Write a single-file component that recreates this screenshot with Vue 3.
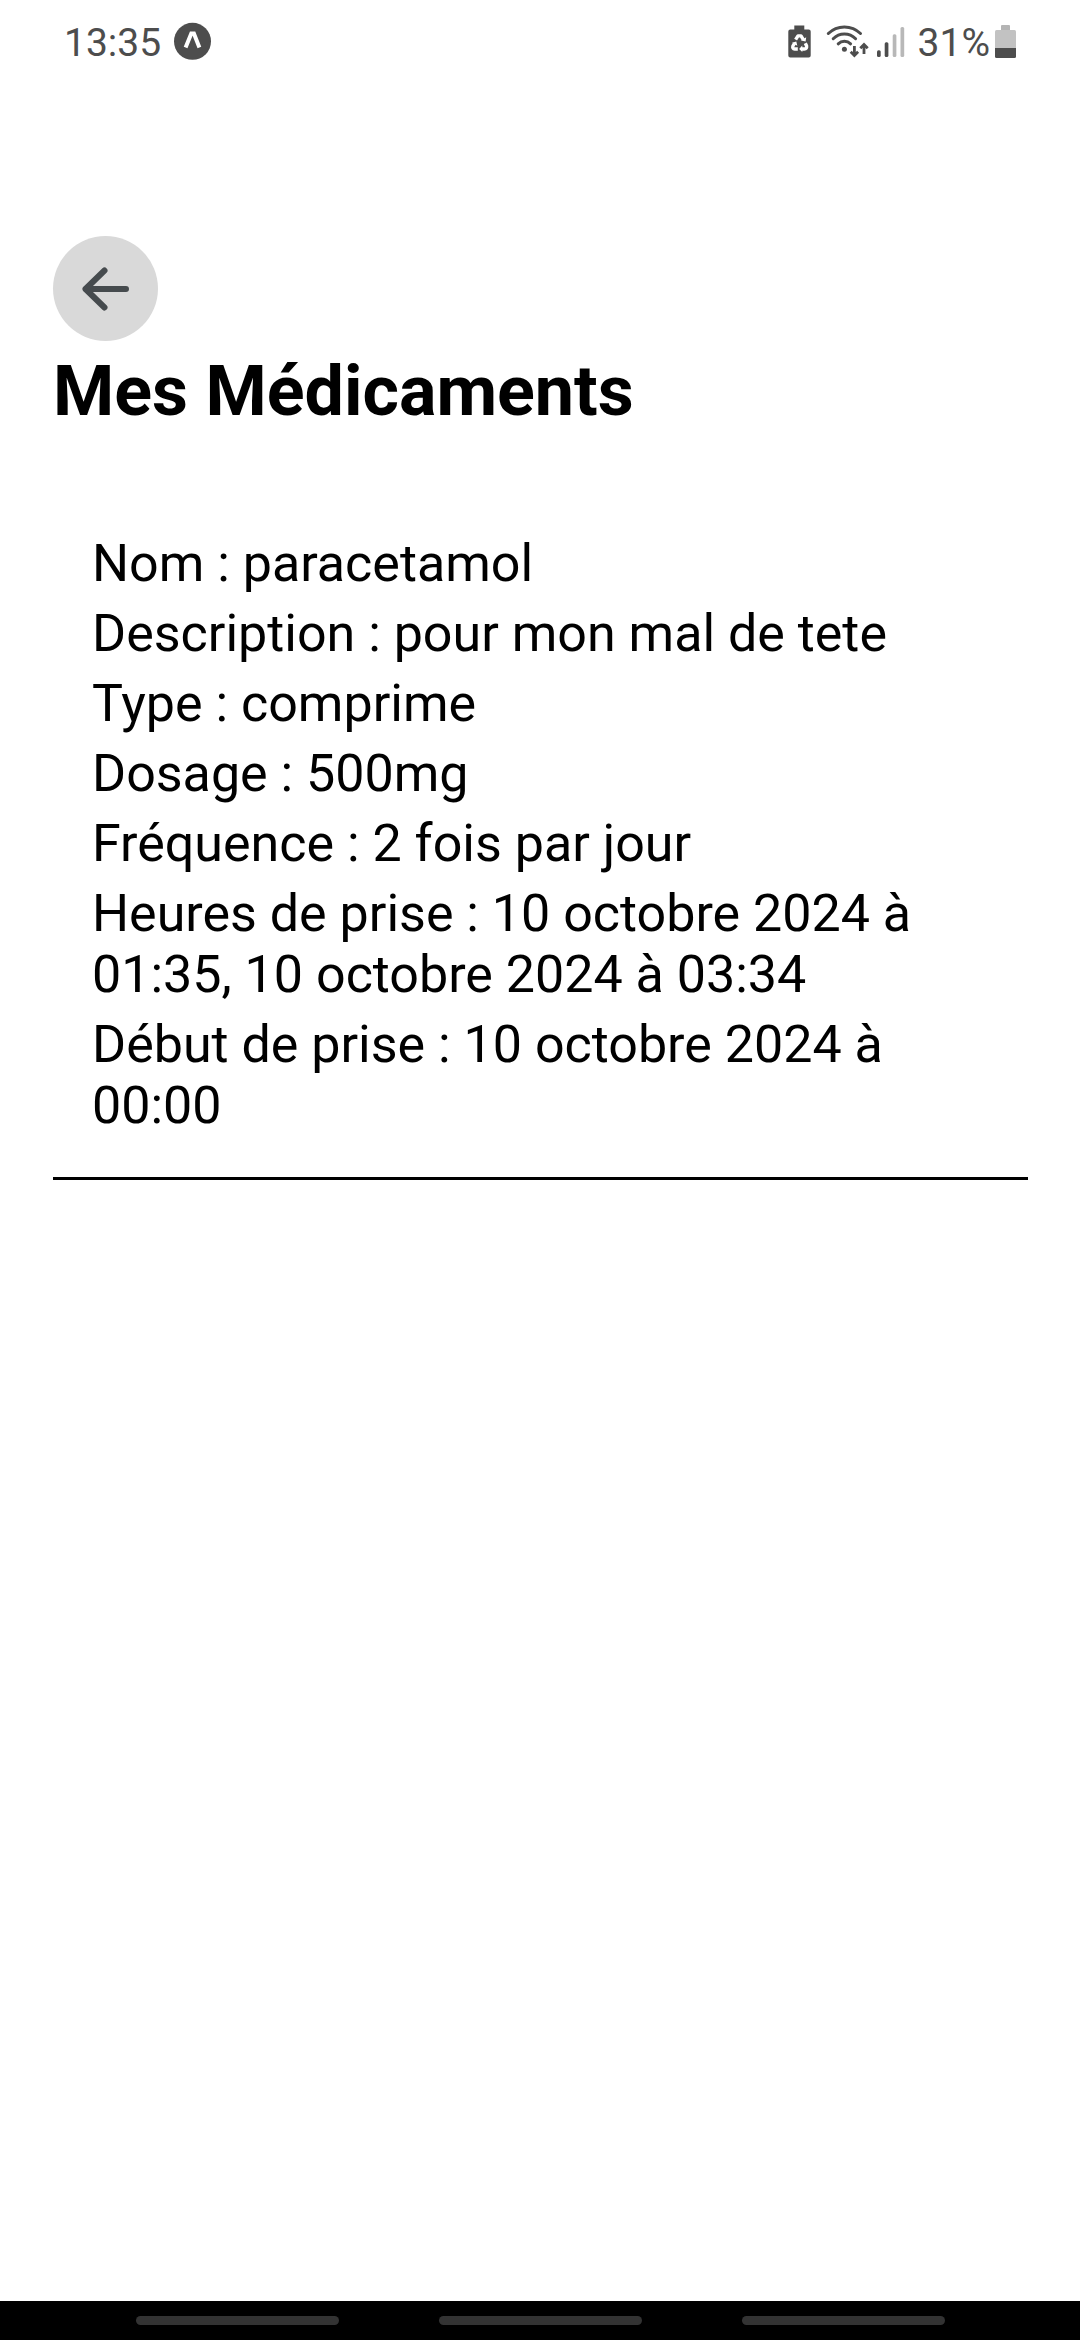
<script setup>
const details = [
  { label: 'Nom', value: 'paracetamol' },
  { label: 'Description', value: 'pour mon mal de tete' },
  { label: 'Type', value: 'comprime' },
  { label: 'Dosage', value: '500mg' },
  { label: 'Fréquence', value: '2 fois par jour' },
  { label: 'Heures de prise', value: '10 octobre 2024 à 01:35, 10 octobre 2024 à 03:34' },
  { label: 'Début de prise', value: '10 octobre 2024 à 00:00' },
]
</script>

<template>
  <div class="screen">
    <header class="status">
      <span class="reading">13:35</span>
      <svg class="expo" width="37" height="40" viewBox="0 0 37 40" aria-hidden="true">
        <circle cx="18.5" cy="20.3" r="18.5" fill="#4d4d4d" />
        <path d="M11.6 26.6 17.3 12.6h2.6L25.4 26.6" fill="none" stroke="#fff" stroke-width="4" />
      </svg>
      <div class="indicators">
        <svg class="saver" width="23" height="40" viewBox="0 0 23 40" aria-hidden="true">
          <path d="M6.3 4.5h10v4h4.4q2 0 2 2v24q0 2-2 2H2.3q-2 0-2-2v-24q0-2 2-2h4z" fill="#4d4d4d" />
          <g fill="none" stroke="#fff" stroke-width="3.4" stroke-linejoin="round">
            <path d="M7.6 18.6 10 14.9h3l2.3 3.7" />
            <path d="M17.3 22.3 18.6 25q.4 3-2.3 3h-2.7" />
            <path d="M9.8 28H6.8q-2.7-.3-1.9-3l1.6-2.7" />
          </g>
          <path d="m13 19.5 4.6 1.1.6-4.3zM14.3 24.5l-3.2 3.5 3.2 3zM4 21.8l4.3-1.2 1 4.2z" fill="#fff" />
        </svg>
        <svg class="wifi" width="43" height="40" viewBox="0 0 43 40" aria-hidden="true">
          <g fill="none" stroke="#4d4d4d" stroke-width="3" stroke-linecap="round">
            <path d="M2.3 12.5A22.9 22.9 0 0 1 34.5 12.5" />
            <path d="M7.2 17.7A15.7 15.7 0 0 1 29.6 17.7" />
            <path d="M12.2 22.8A9 9 0 0 1 24.6 22.8" />
          </g>
          <circle cx="18.4" cy="28.3" r="2.5" fill="#4d4d4d" />
          <g fill="none" stroke="#4d4d4d" stroke-width="2.8">
            <path d="M28.4 25v9.5M24.7 30.7l3.7 3.7 3.7-3.7" />
            <path d="M38 33v-9.5M34.3 27.3 38 23.6l3.7 3.7" />
          </g>
        </svg>
        <svg class="signal" width="28" height="40" viewBox="0 0 28 40" aria-hidden="true">
          <rect x="0" y="29.3" width="3.7" height="6.7" rx="1.5" fill="#4d4d4d" />
          <rect x="7.7" y="21.3" width="3.7" height="14.7" rx="1.5" fill="#4d4d4d" />
          <rect x="15.7" y="13.2" width="3.7" height="22.8" rx="1.5" fill="#b8b8b8" />
          <rect x="23.5" y="6" width="3.7" height="30" rx="1.5" fill="#b8b8b8" />
        </svg>
        <span class="reading">31%</span>
        <svg class="battery" width="21" height="40" viewBox="0 0 21 40" aria-hidden="true">
          <path d="M7 4h7q1 0 1 1v4H6V5q0-1 1-1z" fill="#b4b4b4" />
          <path d="M1.5 9h18q1.5 0 1.5 1.5V27H0V10.5Q0 9 1.5 9z" fill="#c2c2c2" />
          <path d="M0 27h21v8.500q0 1.500-1.500 1.500h-18Q0 37 0 35.500z" fill="#4d4d4d" />
        </svg>
      </div>
    </header>

    <main class="content">
      <button class="back" type="button" aria-label="Retour">
        <svg width="63" height="63" viewBox="0 0 63 63" aria-hidden="true">
          <path d="M52 32H11.5M30.5 13.5 11.5 32l19 18.5" fill="none" stroke="#464b4e" stroke-width="6" stroke-linecap="round" stroke-linejoin="round" />
        </svg>
      </button>
      <h1>Mes Médicaments</h1>
      <article class="medication">
        <p v-for="item in details" :key="item.label">{{ item.label }} : {{ item.value }}</p>
      </article>
    </main>

    <nav class="gestures" aria-label="Navigation système">
      <span v-for="n in 3" :key="n" class="handle"></span>
    </nav>
  </div>
</template>

<style>
body {
  margin: 0;
  background: #fff;
}
</style>

<style scoped>
.screen {
  display: flex;
  flex-direction: column;
  min-height: 100vh;
  font-family: Roboto, "Liberation Sans", sans-serif;
  color: #000;
  background: #fff;
}

.status {
  display: flex;
  align-items: center;
  height: 82px;
  padding: 0 64px;
  font-size: 39px;
  line-height: 46px;
  color: #4d4d4d;
}

.status svg {
  display: block;
  flex: none;
}

.reading {
  padding-top: 4px;
}

.expo {
  margin-left: 13px;
}

.indicators {
  display: flex;
  align-items: center;
  margin-left: auto;
}

.wifi {
  margin-left: 15px;
}

.signal {
  margin: 0 13px 0 8px;
}

.battery {
  margin-left: 5px;
}

.content {
  flex: 1;
  padding: 154px 52px 0 53px;
}

.back {
  display: flex;
  align-items: center;
  justify-content: center;
  width: 105px;
  height: 105px;
  padding: 0;
  border: 0;
  border-radius: 50%;
  background: #d9d9d9;
}

h1 {
  margin: 9px 0 0;
  font-size: 70px;
  line-height: 82px;
  font-weight: 700;
}

.medication {
  display: flex;
  flex-direction: column;
  gap: 9px;
  margin-top: 60px;
  padding: 41px 39px;
  border-bottom: 3px solid #000;
  font-size: 52px;
  line-height: 61px;
}

.medication p {
  margin: 0;
}

.gestures {
  display: flex;
  align-items: center;
  justify-content: center;
  gap: 100px;
  height: 39px;
  background: #000;
}

.handle {
  width: 203px;
  height: 9px;
  border-radius: 5px;
  background: #333;
}
</style>
